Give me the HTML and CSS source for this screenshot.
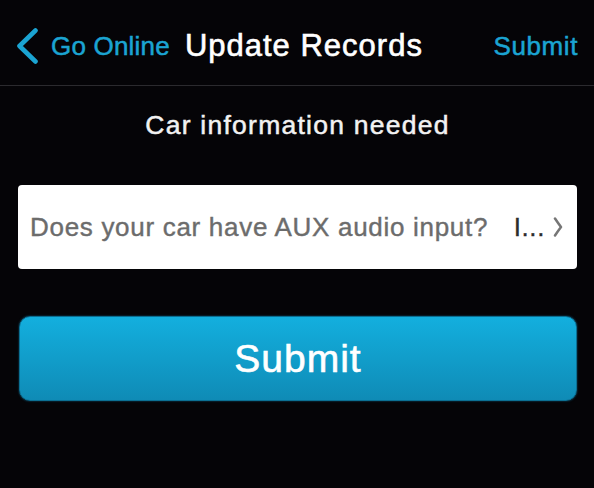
FILE: index.html
```html
<!DOCTYPE html>
<html>
<head>
<meta charset="utf-8">
<link rel="stylesheet" href="styles.css">
</head>
<body>
<div class="screen">
  <header class="nav">
    <a class="back">
      <svg class="back-icon" width="22" height="36" viewBox="0 0 22 36">
        <polyline points="19.5,2.5 3.5,18 19.5,33.5" fill="none" stroke="#1ba4d2" stroke-width="4.6" stroke-linecap="round" stroke-linejoin="round"/>
      </svg>
      <span class="back-label">Go Online</span>
    </a>
    <h1 class="title">Update Records</h1>
    <span class="spacer"></span>
    <a class="nav-submit">Submit</a>
  </header>
  <main class="content">
    <h2 class="heading">Car information needed</h2>
    <div class="field">
      <span class="field-label">Does your car have AUX audio input?</span>
      <span class="field-value">I...</span>
      <svg class="field-chevron" width="10" height="20" viewBox="0 0 10 20">
        <path d="M2,1.5 Q5,6 8,10 Q5,14 2,18.5" fill="none" stroke="#767676" stroke-width="2.5" stroke-linecap="round" stroke-linejoin="round"/>
      </svg>
    </div>
    <button class="submit-btn">Submit</button>
  </main>
</div>
</body>
</html>
```

FILE: styles.css
```css
html, body {
  margin: 0;
  padding: 0;
  background: #050407;
}

body {
  width: 594px;
  height: 488px;
  overflow: hidden;
  font-family: "Liberation Sans", Arial, Helvetica, sans-serif;
}

.screen {
  display: flex;
  flex-direction: column;
}

.nav {
  box-sizing: border-box;
  height: 86px;
  padding: 6px 16px 0 16px;
  display: flex;
  align-items: center;
  border-bottom: 1px solid #2b2a2e;
}

.back {
  display: flex;
  align-items: center;
  gap: 13px;
  color: #1ba4d2;
}

.back-icon {
  display: block;
}

.back-label {
  font-size: 26px;
  letter-spacing: 0.2px;
  line-height: 30px;
  -webkit-text-stroke: 0.5px currentColor;
}

.title {
  margin: 0 0 0 15px;
  font-size: 31px;
  font-weight: normal;
  color: #ffffff;
  letter-spacing: 1px;
  line-height: 36px;
  -webkit-text-stroke: 0.6px currentColor;
}

.spacer {
  flex: 1;
}

.nav-submit {
  font-size: 26px;
  letter-spacing: 0.6px;
  color: #1ba4d2;
  line-height: 30px;
  -webkit-text-stroke: 0.5px currentColor;
}

.content {
  display: flex;
  flex-direction: column;
  padding: 0 17px 0 18px;
}

.heading {
  margin: 24px 0 0 0;
  height: 30px;
  line-height: 30px;
  font-size: 26.5px;
  font-weight: normal;
  letter-spacing: 1.25px;
  color: #f2f2f2;
  text-align: center;
  -webkit-text-stroke: 0.5px currentColor;
}

.field {
  box-sizing: border-box;
  margin-top: 45px;
  height: 84px;
  background: #ffffff;
  border-radius: 4px;
  display: flex;
  align-items: center;
  padding: 0 14px 0 12px;
}

.field-label {
  font-size: 26px;
  letter-spacing: 0.7px;
  color: #6c6c6c;
  white-space: nowrap;
  -webkit-text-stroke: 0.4px currentColor;
}

.field-value {
  margin-left: auto;
  font-size: 26px;
  letter-spacing: 0.6px;
  color: #2c2c2c;
  -webkit-text-stroke: 0.3px currentColor;
}

.field-chevron {
  display: block;
  margin-left: 8px;
}

.submit-btn {
  box-sizing: border-box;
  margin: 47px 0 0 1px;
  height: 85px;
  border: 1px solid #0b6f93;
  border-radius: 11px;
  background: linear-gradient(#13afde, #0f8bb6);
  box-shadow: 0 0 2px rgba(20, 150, 200, 0.6);
  color: #ffffff;
  font-family: "Liberation Sans", Arial, Helvetica, sans-serif;
  font-size: 39px;
  letter-spacing: 1px;
  padding: 0;
  -webkit-text-stroke: 0.6px currentColor;
}
```
